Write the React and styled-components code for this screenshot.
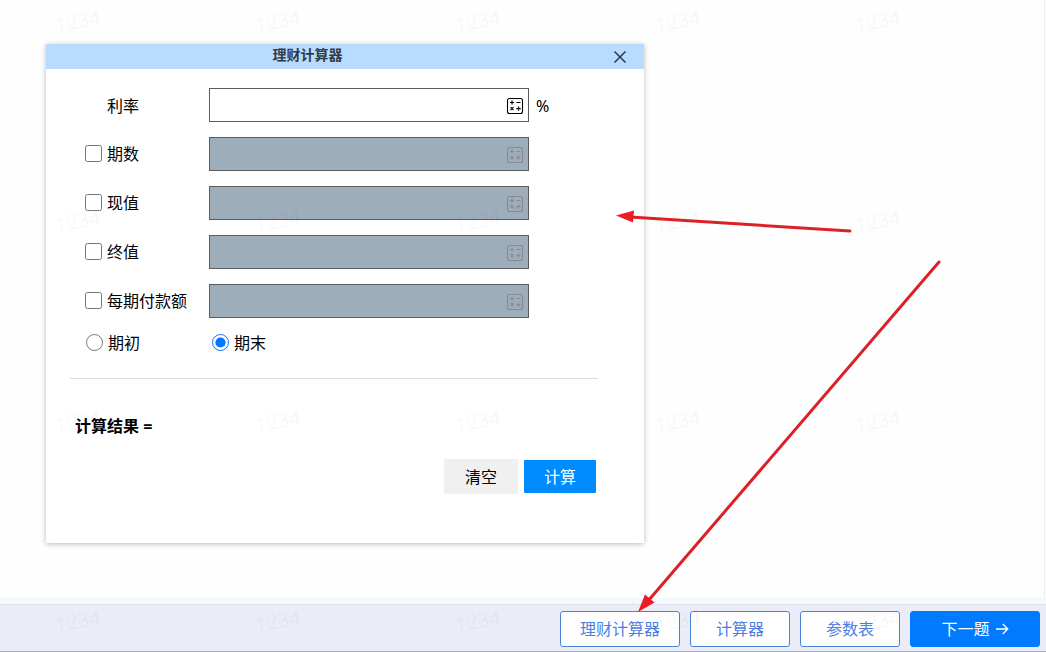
import React, { useState } from "react";
import styled, { createGlobalStyle, css } from "styled-components";

const GlobalStyle = createGlobalStyle`
  *, *::before, *::after { box-sizing: border-box; }
  body {
    margin: 0;
    background: #fefefe;
    color: #000;
    font: 16px/24px "Noto Sans", "Noto Sans CJK SC", sans-serif;
  }
  button, input { font: inherit; }
`;

const Page = styled.div`
  position: relative;
  display: flex;
  flex-direction: column;
  min-height: 100vh;
  overflow: hidden;
`;

const Main = styled.main`
  flex: 1;
  margin-right: 1px;
  padding: 44px 44px 44px 46px;
  border-right: 1px solid #ececf4;
`;

const Dialog = styled.section`
  max-width: 598px;
  padding-bottom: 49px;
  background: #fff;
  box-shadow: 0 1px 5px rgba(0, 0, 0, 0.28);
`;

const DialogHeader = styled.header`
  display: flex;
  align-items: center;
  height: 25px;
  padding-right: 15px;
  background: #b8dcff;
`;

const DialogTitle = styled.h1`
  flex: 1;
  margin: 0;
  padding: 0 0 4px 42px;
  color: #333b45;
  font-size: 14px;
  line-height: 20px;
  text-align: center;
`;

const TitleSpace = styled.span`
  width: 84px;
`;

const CloseButton = styled.button`
  display: flex;
  align-items: center;
  justify-content: center;
  width: 18px;
  height: 18px;
  padding: 0;
  border: 0;
  background: none;
  color: #2c3548;
`;

const Form = styled.form`
  padding: 19px 46px 0 24px;
`;

const Fields = styled.div`
  display: grid;
  gap: 15px;
`;

const FieldRow = styled.div`
  display: grid;
  grid-template-columns: 124px 320px auto;
  align-items: center;
  padding-left: 15px;
`;

const Choice = styled.label`
  display: flex;
  align-items: center;
  gap: 5px;
  white-space: nowrap;
`;

const FieldName = styled.label`
  padding: 2px 0 0 22px;
`;

const Tick = styled.input`
  width: 17px;
  height: 17px;
  margin: 0 0 1px;
`;

const InputWrap = styled.div`
  display: flex;
  align-items: center;
  height: 34px;
  padding-right: 4px;
  border: 1px solid #5a5c5e;
  background: ${(p) => (p.$disabled ? "#9eadba" : "#fff")};
`;

const NumberInput = styled.input`
  flex: 1;
  min-width: 0;
  height: 100%;
  padding: 0 8px;
  border: 0;
  outline: 0;
  background: transparent;
`;

const KeypadButton = styled.button`
  display: flex;
  padding: 1px 0 0;
  border: 0;
  background: none;
  color: #000;
  &:disabled { color: #8b8893; }
`;

const Unit = styled.span`
  padding: 2px 0 0 7px;
`;

const Timing = styled.div`
  display: grid;
  grid-template-columns: 126px auto;
  padding: 13px 0 23px 16px;
`;

const Divider = styled.hr`
  height: 1px;
  margin: 0;
  border: 0;
  background: #dedede;
`;

const Result = styled.output`
  display: block;
  padding: 35px 5px 0;
  font-weight: 700;
`;

const Actions = styled.div`
  display: flex;
  align-items: center;
  justify-content: flex-end;
  gap: 6px;
  padding: 21px 2px 0 0;
`;

const ActionButton = styled.button`
  width: 74px;
  height: 35px;
  padding: 0;
  border: 0;
  border-radius: 1px;
  background: #f0f0f0;
  color: #000;
  ${(p) => p.$primary && css`
    width: 72px;
    height: 33px;
    background: #008cff;
    color: #fff;
  `}
`;

const Footer = styled.footer`
  display: flex;
  justify-content: flex-end;
  gap: 10px;
  padding: 6px 6px 4px;
  border-top: 1px solid #dfe2f3;
  border-bottom: 1px solid #a9afba;
  background: #eaecf8;
  box-shadow: 0 -6px 0 #f6f7f8;
`;

const FooterButton = styled.button`
  display: flex;
  align-items: center;
  justify-content: center;
  gap: 5px;
  width: ${(p) => p.$width}px;
  height: 36px;
  padding: 0;
  border: 1px solid #4a82e0;
  border-radius: 3px;
  background: #fff;
  color: #4a80e4;
  ${(p) => p.$primary && css`
    position: relative;
    z-index: 2;
    border-color: #007aff;
    background: #007aff;
    color: #fff;
  `}
`;

const Watermarks = styled.div`
  position: absolute;
  inset: 0;
  z-index: 1;
  display: grid;
  grid-template-columns: repeat(auto-fill, 200px);
  grid-auto-rows: 200px;
  overflow: hidden;
  pointer-events: none;
  user-select: none;
`;

const Mark = styled.span`
  justify-self: start;
  align-self: start;
  margin: 9px 0 0 55px;
  color: rgba(0, 0, 0, 0.05);
  font-size: 20px;
  line-height: 24px;
  transform: rotate(-10deg);
`;

const Arrows = styled.svg`
  position: absolute;
  top: 0;
  left: 0;
  z-index: 3;
  pointer-events: none;
`;

const KeypadIcon = () => (
  <svg width="18" height="18" viewBox="0 0 18 18" fill="none" stroke="currentColor" aria-hidden="true">
    <rect x="1.5" y="1.5" width="15" height="15" rx="2" strokeWidth="1.1" />
    <path d="M4 5.5h4M6 3.5v4M10.5 5.5h4M4.5 10.2l3 3M7.5 10.2l-3 3M10.3 11.7h4.4" strokeWidth="1.2" />
    <path d="M12.5 9.6v1.2M12.5 12.6v1.2" strokeWidth="1.4" />
  </svg>
);

const CloseIcon = () => (
  <svg width="14" height="14" viewBox="0 0 14 14" fill="none" stroke="currentColor" strokeWidth="1.5" aria-hidden="true">
    <path d="M1.5 1.5l11 11M12.5 1.5l-11 11" />
  </svg>
);

const NextIcon = () => (
  <svg width="14" height="14" viewBox="0 0 14 14" fill="none" stroke="currentColor" strokeWidth="1.3" aria-hidden="true">
    <path d="M1 7h11.5M7.8 2l5 5-5 5" />
  </svg>
);

const FIELDS = [
  { id: "periods", name: "期数" },
  { id: "present", name: "现值" },
  { id: "future", name: "终值" },
  { id: "payment", name: "每期付款额" },
];

function NumberField({ id, name, disabled }) {
  return (
    <InputWrap $disabled={disabled}>
      <NumberInput id={id} aria-label={name} disabled={disabled} />
      <KeypadButton type="button" disabled={disabled} aria-label="键盘">
        <KeypadIcon />
      </KeypadButton>
    </InputWrap>
  );
}

export default function App() {
  const [enabled, setEnabled] = useState({});
  const [timing, setTiming] = useState("end");

  const toggle = (id) => setEnabled((prev) => ({ ...prev, [id]: !prev[id] }));
  const clear = () => {
    setEnabled({});
    setTiming("end");
  };

  return (
    <Page>
      <GlobalStyle />
      <Main>
        <Dialog role="dialog" aria-labelledby="dialog-title">
          <DialogHeader>
            <DialogTitle id="dialog-title">理财计算器</DialogTitle>
            <TitleSpace />
            <CloseButton type="button" aria-label="关闭">
              <CloseIcon />
            </CloseButton>
          </DialogHeader>
          <Form onSubmit={(e) => e.preventDefault()} onReset={clear}>
            <Fields>
              <FieldRow>
                <FieldName htmlFor="rate">利率</FieldName>
                <NumberField id="rate" name="利率" disabled={false} />
                <Unit>%</Unit>
              </FieldRow>
              {FIELDS.map(({ id, name }) => (
                <FieldRow key={id}>
                  <Choice>
                    <Tick type="checkbox" checked={!!enabled[id]} onChange={() => toggle(id)} />
                    {name}
                  </Choice>
                  <NumberField id={id} name={name} disabled={!enabled[id]} />
                </FieldRow>
              ))}
            </Fields>
            <Timing>
              <Choice>
                <Tick type="radio" name="timing" checked={timing === "start"} onChange={() => setTiming("start")} />
                期初
              </Choice>
              <Choice>
                <Tick type="radio" name="timing" checked={timing === "end"} onChange={() => setTiming("end")} />
                期末
              </Choice>
            </Timing>
            <Divider />
            <Result>计算结果 =</Result>
            <Actions>
              <ActionButton type="reset">清空</ActionButton>
              <ActionButton type="submit" $primary>计算</ActionButton>
            </Actions>
          </Form>
        </Dialog>
      </Main>
      <Footer>
        <FooterButton type="button" $width={120}>理财计算器</FooterButton>
        <FooterButton type="button" $width={100}>计算器</FooterButton>
        <FooterButton type="button" $width={100}>参数表</FooterButton>
        <FooterButton type="button" $width={130} $primary>
          下一题
          <NextIcon />
        </FooterButton>
      </Footer>
      <Watermarks aria-hidden="true">
        {Array.from({ length: 20 }, (_, i) => (
          <Mark key={i}>1234</Mark>
        ))}
      </Watermarks>
      <Arrows width="1046" height="652" viewBox="0 0 1046 652" aria-hidden="true">
        <g stroke="#dc2028" strokeWidth="3" strokeLinecap="round">
          <path d="M630 217L850 231" />
          <path d="M648 601L939 262" />
        </g>
        <g fill="#ed1c24">
          <path d="M616 215.5L634 210.5L633 222.5Z" />
          <path d="M638 612L645 594.5L654.5 602.5Z" />
        </g>
      </Arrows>
    </Page>
  );
}
